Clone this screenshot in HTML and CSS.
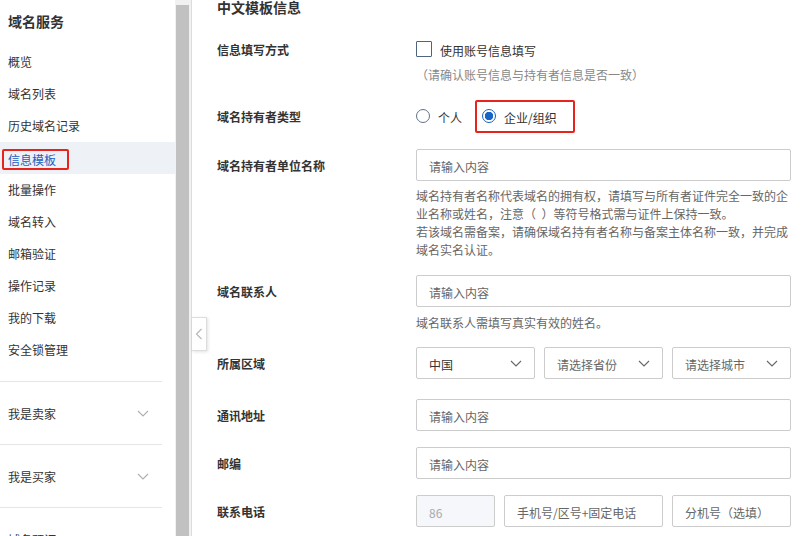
FILE: index.html
```html
<!DOCTYPE html>
<html lang="zh-CN">
<head>
  <meta charset="UTF-8" />
  <meta name="viewport" content="width=device-width, initial-scale=1.0"/>
  <title>信息模板</title>
  <link rel="stylesheet" href="styles.css">
</head>
<body>
  <div class="page">
    <aside class="sidebar">
      <div class="side-inner">
        <h2 class="side-title">域名服务</h2>
        <ul class="side-menu">
          <li>概览</li>
          <li>域名列表</li>
          <li>历史域名记录</li>
          <li class="active"><span class="mark">信息模板</span></li>
          <li>批量操作</li>
          <li>域名转入</li>
          <li>邮箱验证</li>
          <li>操作记录</li>
          <li>我的下载</li>
          <li>安全锁管理</li>
        </ul>
        <div class="side-group">
          <span>我是卖家</span>
          <svg width="12" height="7" viewBox="0 0 12 7"><path d="M1 1l5 5 5-5" fill="none" stroke="#b0b0b0" stroke-width="1.2"/></svg>
        </div>
        <div class="side-group">
          <span>我是买家</span>
          <svg width="12" height="7" viewBox="0 0 12 7"><path d="M1 1l5 5 5-5" fill="none" stroke="#b0b0b0" stroke-width="1.2"/></svg>
        </div>
        <div class="side-group">
          <span>域名预订</span>
        </div>
      </div>
      <div class="scrollbar"><div class="thumb"></div></div>
    </aside>

    <main class="main">
      <div class="collapse-tab">
        <svg width="8" height="12" viewBox="0 0 8 12"><path d="M6.5 1L1.5 6l5 5" fill="none" stroke="#b8b8b8" stroke-width="1.2"/></svg>
      </div>

      <h3 class="sec-title">中文模板信息</h3>

      <div class="form-item item-first">
        <label class="form-label">信息填写方式</label>
        <div class="form-ctrl">
          <div class="check-row">
            <span class="checkbox"></span>
            <span class="txt">使用账号信息填写</span>
          </div>
          <div class="note">（请确认账号信息与持有者信息是否一致）</div>
        </div>
      </div>

      <div class="form-item item-radio">
        <label class="form-label">域名持有者类型</label>
        <div class="form-ctrl radio-row">
          <span class="radio-opt"><span class="radio"></span><span class="txt">个人</span></span>
          <span class="radio-opt mark-box"><span class="radio checked"></span><span class="txt">企业/组织</span></span>
        </div>
      </div>

      <div class="form-item">
        <label class="form-label">域名持有者单位名称</label>
        <div class="form-ctrl">
          <div class="input"><span class="txt">请输入内容</span></div>
          <p class="help">域名持有者名称代表域名的拥有权，请填写与所有者证件完全一致的企业名称或姓名，注意（&nbsp;&nbsp;）等符号格式需与证件上保持一致。<br>若该域名需备案，请确保域名持有者名称与备案主体名称一致，并完成域名实名认证。</p>
        </div>
      </div>

      <div class="form-item item-contact">
        <label class="form-label">域名联系人</label>
        <div class="form-ctrl">
          <div class="input"><span class="txt">请输入内容</span></div>
          <p class="help">域名联系人需填写真实有效的姓名。</p>
        </div>
      </div>

      <div class="form-item item-area">
        <label class="form-label">所属区域</label>
        <div class="form-ctrl ctrl-row">
          <div class="input select value"><span class="txt">中国</span>
            <svg width="12" height="7" viewBox="0 0 12 7"><path d="M1 1l5 5 5-5" fill="none" stroke="#666" stroke-width="1.1"/></svg>
          </div>
          <div class="input select"><span class="txt">请选择省份</span>
            <svg width="12" height="7" viewBox="0 0 12 7"><path d="M1 1l5 5 5-5" fill="none" stroke="#666" stroke-width="1.1"/></svg>
          </div>
          <div class="input select"><span class="txt">请选择城市</span>
            <svg width="12" height="7" viewBox="0 0 12 7"><path d="M1 1l5 5 5-5" fill="none" stroke="#666" stroke-width="1.1"/></svg>
          </div>
        </div>
      </div>

      <div class="form-item">
        <label class="form-label">通讯地址</label>
        <div class="form-ctrl"><div class="input"><span class="txt">请输入内容</span></div></div>
      </div>

      <div class="form-item">
        <label class="form-label">邮编</label>
        <div class="form-ctrl"><div class="input"><span class="txt">请输入内容</span></div></div>
      </div>

      <div class="form-item">
        <label class="form-label">联系电话</label>
        <div class="form-ctrl ctrl-row">
          <div class="input code"><span class="txt">86</span></div>
          <div class="input phone"><span class="txt">手机号/区号+固定电话</span></div>
          <div class="input ext"><span class="txt">分机号（选填）</span></div>
        </div>
      </div>
    </main>
  </div>
</body>
</html>
```

FILE: styles.css
```css
html, body {
  margin: 0;
  padding: 0;
  height: 100%;
  overflow: hidden;
  background: #fff;
  color: #333;
  font-family: "Noto Sans CJK SC", "Microsoft YaHei", sans-serif;
  font-size: 12px;
}

.page {
  display: flex;
  height: 536px;
}

.txt {
  position: relative;
  top: 1px;
}

/* sidebar */
.sidebar {
  display: flex;
  width: 191px;
  flex: none;
}

.side-inner {
  width: 175px;
  overflow: hidden;
}

.side-title {
  margin: 0;
  padding: 11px 0 0 8px;
  height: 35px;
  line-height: 20px;
  font-size: 14px;
  font-weight: bold;
  color: #333;
}

.side-menu {
  list-style: none;
  margin: 0 0 15px;
  padding: 0;
}

.side-menu li {
  height: 32px;
  line-height: 32px;
  padding-left: 8px;
}

.side-menu li.active {
  background: #eef1f6;
  color: #1d5fbf;
}

.mark {
  display: inline-block;
  height: 17px;
  line-height: 17px;
  margin-left: -6px;
  padding: 0 11px 0 4px;
  border: 2px solid #e8231d;
  border-radius: 2px;
  vertical-align: middle;
}

.side-group {
  display: flex;
  align-items: center;
  justify-content: space-between;
  height: 62px;
  margin-right: 13px;
  padding: 0 13px 0 8px;
  border-top: 1px solid #e6e6e6;
}

.scrollbar {
  width: 16px;
  background: #f1f1f1;
  padding: 5px 2px 0 1px;
  box-sizing: border-box;
}

.thumb {
  height: 100%;
  background: #c1c1c1;
}

/* main */
.main {
  position: relative;
  flex: 1;
  padding: 0 18px 0 25px;
  border-left: 1px solid #dcdcdc;
}

.collapse-tab {
  position: absolute;
  left: 0;
  top: 317px;
  width: 14px;
  height: 32px;
  display: flex;
  align-items: center;
  justify-content: center;
  background: #fff;
  border: 1px solid #ddd;
  border-left: none;
  box-shadow: 1px 1px 3px rgba(0, 0, 0, 0.12);
}

.sec-title {
  margin: 0 0 19px;
  line-height: 14px;
  font-size: 14px;
  font-weight: bold;
  color: #333;
}

.form-item {
  display: flex;
  margin-bottom: 16px;
}

.item-first { margin-bottom: 15px; }
.item-radio { margin-bottom: 17px; }
.item-contact { margin-bottom: 15px; }
.item-area { margin-bottom: 20px; }

.form-label {
  width: 199px;
  flex: none;
  padding-top: 1px;
  height: 31px;
  line-height: 32px;
  font-weight: 600;
  color: #333;
}

.form-ctrl {
  width: 375px;
}

.check-row {
  display: flex;
  align-items: center;
  height: 32px;
  gap: 8px;
}

.checkbox {
  width: 14px;
  height: 14px;
  border: 1px solid #4e6480;
  border-radius: 1px;
}

.note {
  line-height: 20px;
  color: #888;
}

.radio-row {
  display: flex;
  align-items: center;
  height: 32px;
  gap: 13px;
}

.radio-opt {
  display: flex;
  align-items: center;
  gap: 8px;
  color: #333;
}

.radio {
  width: 12px;
  height: 12px;
  border: 1px solid #5f738a;
  border-radius: 50%;
  box-sizing: content-box;
}

.radio.checked {
  border-color: #1a5fbf;
  background: radial-gradient(circle, #1565c7 0 4px, #fff 4.5px);
}

.mark-box {
  height: 29px;
  padding: 0 16px 0 5px;
  border: 2px solid #e8231d;
  border-radius: 2px;
}

.input {
  display: flex;
  align-items: center;
  justify-content: space-between;
  height: 30px;
  padding: 0 12px;
  border: 1px solid #ccc;
  border-radius: 2px;
  color: #666;
}

.help {
  margin: 6px 0 0;
  line-height: 18px;
  color: #666;
}

.item-contact .help {
  margin-top: 7px;
}

.ctrl-row {
  display: flex;
  gap: 9px;
}

.select {
  flex: 1;
}

.select.value {
  color: #333;
}

.code {
  width: 53px;
  flex: none;
  background: #f5f7fa;
  color: #aaa;
}

.phone {
  width: 133px;
  flex: none;
  justify-content: flex-start;
}

.ext {
  flex: 1;
  justify-content: flex-start;
}
```
